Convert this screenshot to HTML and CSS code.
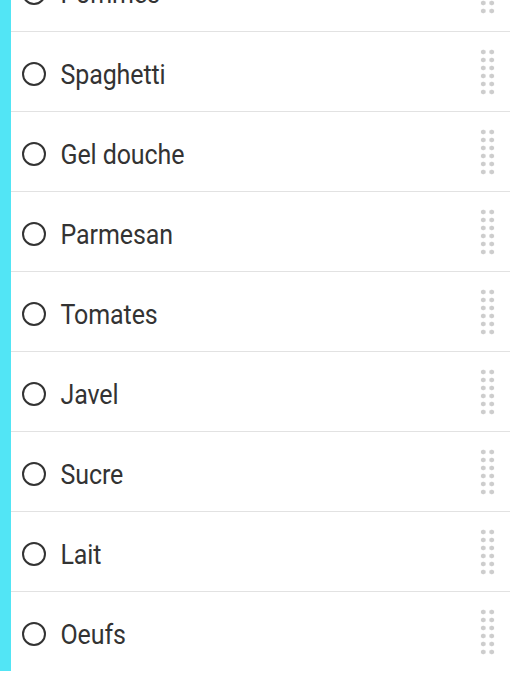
FILE: index.html
```html
<!DOCTYPE html>
<html lang="fr">
<head>
<meta charset="utf-8">
<link rel="stylesheet" href="styles.css">
<title>Liste</title>
</head>
<body>
<ul class="list">
  <li class="row"><span class="check"></span><span class="label">Pommes</span><span class="handle"></span></li>
  <li class="row"><span class="check"></span><span class="label">Spaghetti</span><span class="handle"></span></li>
  <li class="row"><span class="check"></span><span class="label">Gel douche</span><span class="handle"></span></li>
  <li class="row"><span class="check"></span><span class="label">Parmesan</span><span class="handle"></span></li>
  <li class="row"><span class="check"></span><span class="label">Tomates</span><span class="handle"></span></li>
  <li class="row"><span class="check"></span><span class="label">Javel</span><span class="handle"></span></li>
  <li class="row"><span class="check"></span><span class="label">Sucre</span><span class="handle"></span></li>
  <li class="row"><span class="check"></span><span class="label">Lait</span><span class="handle"></span></li>
  <li class="row"><span class="check"></span><span class="label">Oeufs</span><span class="handle"></span></li>
</ul>
</body>
</html>
```
FILE: styles.css
```css
html, body {
  margin: 0;
  padding: 0;
  background: #fff;
  overflow: hidden;
}
body {
  font-family: Roboto, "Noto Sans", sans-serif;
  color: #333;
}
.list {
  list-style: none;
  margin: -49px 0 0 0;
  padding: 0;
  border-left: 11px solid #52e5f5;
}
.row {
  display: flex;
  align-items: center;
  height: 79px;
  border-top: 1px solid #e2e2e2;
  padding-left: 11px;
  padding-right: 14px;
}
.row:first-child {
  border-top: none;
  height: 80px;
}
.check {
  width: 20px;
  height: 20px;
  margin-top: 4px;
  border: 2.4px solid #333;
  border-radius: 50%;
  flex: none;
}
.label {
  flex: 1;
  margin-left: 14.5px;
  padding-top: 5px;
  font-size: 25px;
  letter-spacing: -0.1px;
  transform: scaleY(1.1);
}
.handle {
  flex: none;
  width: 17px;
  height: 48px;
  background-image: radial-gradient(circle, #cdcdcd 2.1px, transparent 2.7px);
  background-size: 8.5px 8px;
}
```
